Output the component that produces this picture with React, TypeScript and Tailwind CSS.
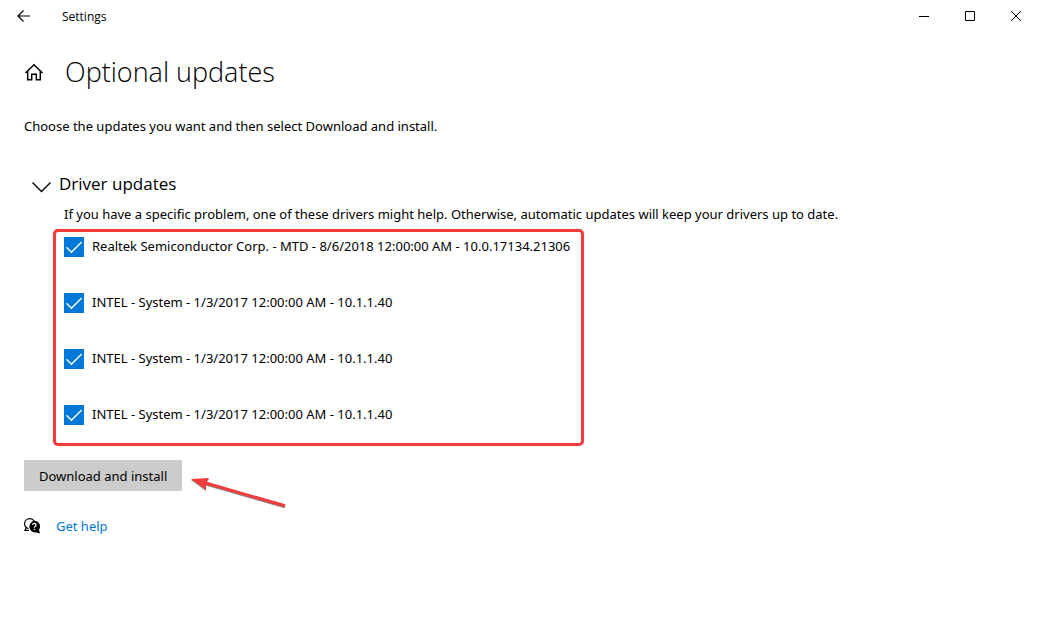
import { useState } from "react";

type DriverUpdate = {
  id: number;
  label: string;
};

const DRIVER_UPDATES: DriverUpdate[] = [
  {
    id: 1,
    label: "Realtek Semiconductor Corp. - MTD - 8/6/2018 12:00:00 AM - 10.0.17134.21306",
  },
  { id: 2, label: "INTEL - System - 1/3/2017 12:00:00 AM - 10.1.1.40" },
  { id: 3, label: "INTEL - System - 1/3/2017 12:00:00 AM - 10.1.1.40" },
  { id: 4, label: "INTEL - System - 1/3/2017 12:00:00 AM - 10.1.1.40" },
];

function TitleBar() {
  return (
    <header className="flex h-8 items-center">
      <button aria-label="Back" className="flex h-8 w-12 items-center justify-center">
        <svg width="14" height="14" viewBox="0 0 14 14" fill="none" stroke="#000" strokeWidth="1.2">
          <path d="M13 7H1.5M6.5 1.5 1 7l5.500 5.500" />
        </svg>
      </button>
      <span className="ml-3.5 pt-0.5 font-['Open_Sans',sans-serif] text-xs">Settings</span>
      <div className="ml-auto flex">
        <button aria-label="Minimize" className="flex h-8 w-[46px] items-center justify-center">
          <svg width="10" height="10" viewBox="0 0 10 10" stroke="#000">
            <path d="M0 5.500h10" />
          </svg>
        </button>
        <button aria-label="Maximize" className="flex h-8 w-[46px] items-center justify-center">
          <svg width="10" height="10" viewBox="0 0 10 10" fill="none" stroke="#000">
            <path d="M.5.5h9v9h-9z" />
          </svg>
        </button>
        <button aria-label="Close" className="flex h-8 w-[46px] items-center justify-center">
          <svg width="10" height="10" viewBox="0 0 10 10" stroke="#000">
            <path d="M0 0l10 10M10 0 0 10" />
          </svg>
        </button>
      </div>
    </header>
  );
}

function HomeIcon() {
  return (
    <svg width="20" height="18" viewBox="0 0 20 18" fill="none" stroke="#000" strokeWidth="1.5">
      <path d="M1.500 10 10 1.800l8.500 8.200" />
      <path d="M3.700 8.200v8.600h4v-5.500h4.600v5.500h4V8.200" />
    </svg>
  );
}

function HelpIcon() {
  return (
    <svg width="16" height="16" viewBox="0 0 16 16">
      <path
        d="M4.500 10.500C2 10 .6 8 .6 5.800.6 3 2.800.7 5.800.7c2 0 3.600.9 4.500 2.500M2.300 9.200 1 12.400h4"
        fill="none"
        stroke="#000"
        strokeWidth="1.200"
      />
      <path d="M10.300 2.800a5.700 5.700 0 0 1 4.700 8.900l1 3.800-3.600-1a5.700 5.700 0 1 1-2.100-11.700z" />
      <path
        d="M8.700 7c0-2.200 3.400-2 3.400 0 0 1.300-1.700 1.300-1.700 2.700M10.400 10.700v1.200"
        fill="none"
        stroke="#fff"
        strokeWidth="1.200"
      />
    </svg>
  );
}

function UpdateRow({ update }: { update: DriverUpdate }) {
  const [checked, setChecked] = useState(true);

  return (
    <li>
      <label className="flex min-h-5 items-start gap-2">
        <span className="relative block h-5 w-5 shrink-0">
          <input
            type="checkbox"
            checked={checked}
            onChange={() => setChecked((prev) => !prev)}
            className="block h-5 w-5 appearance-none border-2 border-gray-600 checked:border-0 checked:bg-[#0078d7]"
          />
          {checked && (
            <svg
              className="pointer-events-none absolute inset-0"
              width="20"
              height="20"
              viewBox="0 0 20 20"
              fill="none"
              stroke="#fff"
              strokeWidth="1.400"
            >
              <path d="M2.500 10.200 7.500 15.200 17.700 5" />
            </svg>
          )}
        </span>
        <span className="leading-[18px]">{update.label}</span>
      </label>
    </li>
  );
}

export default function App() {
  const [expanded, setExpanded] = useState(true);

  return (
    <div className="min-h-screen bg-white font-['Noto_Sans',sans-serif] text-[13px] leading-5 text-black">
      <TitleBar />
      <main className="px-6 pt-5">
        <div className="flex h-10 items-center gap-[21px]">
          <a href="#home" aria-label="Home">
            <HomeIcon />
          </a>
          <h1 className="font-['Open_Sans',sans-serif] text-[27px] font-light">Optional updates</h1>
        </div>
        <p className="mt-6">Choose the updates you want and then select Download and install.</p>

        <section className="mt-9">
          <h2 className="font-['Open_Sans',sans-serif] text-[17px] leading-6">
            <button
              onClick={() => setExpanded((prev) => !prev)}
              aria-expanded={expanded}
              className="ml-2 flex items-center gap-2"
            >
              <svg className="mt-1.5" width="19" height="12" viewBox="0 0 19 12" fill="none" stroke="#000" strokeWidth="1.400">
                <path d="M.5 1.500l9 9 9-9" />
              </svg>
              Driver updates
            </button>
          </h2>
          {expanded && (
            <>
              <p className="mt-2 ml-10">
                If you have a specific problem, one of these drivers might help. Otherwise, automatic
                updates will keep your drivers up to date.
              </p>
              <ul className="mt-[5px] ml-[29px] flex max-w-[531px] flex-col gap-9 rounded-[5px] border-[3px] border-[#f23b3b] px-2 pt-[5px] pb-[18px] shadow-[0_0_1px_#888]">
                {DRIVER_UPDATES.map((update) => (
                  <UpdateRow key={update.id} update={update} />
                ))}
              </ul>
            </>
          )}
        </section>

        <div className="mt-3.5 flex items-start gap-2">
          <button className="h-[31px] bg-[#cccccc] px-[15px]">Download and install</button>
          <svg className="mt-4" width="96" height="32" viewBox="0 0 96 32">
            <path d="M14 7.500 95 30.800" stroke="#888" strokeWidth="3" />
            <path d="M1 4 19 3l-3 4v8z" fill="#888" />
            <path d="M14 6.500 95 29.800" stroke="#f23b3b" strokeWidth="3" />
            <path d="M1 3 19 2l-3 5v7z" fill="#f23b3b" />
          </svg>
        </div>

        <div className="mt-2 flex items-center gap-4">
          <HelpIcon />
          <a href="#help" className="text-[#0078d7]">
            Get help
          </a>
        </div>
      </main>
    </div>
  );
}
